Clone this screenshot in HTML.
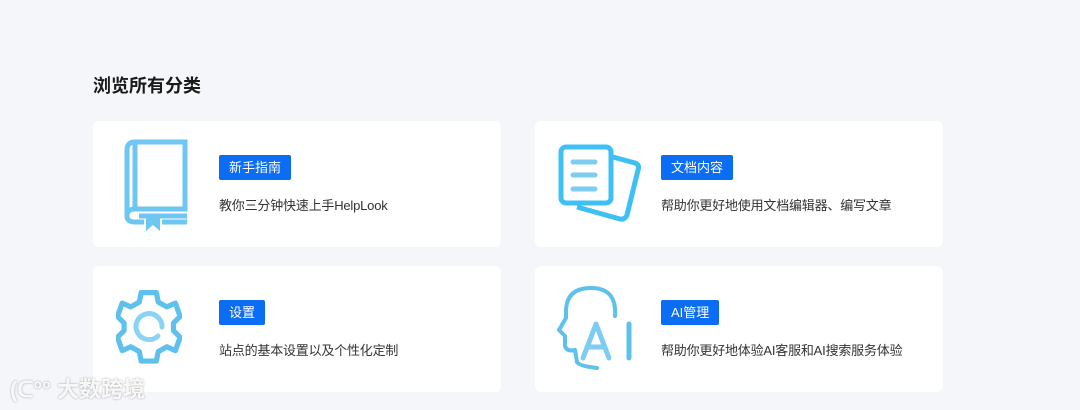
<!DOCTYPE html>
<html><head><meta charset="utf-8"><style>
*{margin:0;padding:0;box-sizing:border-box}
body{width:1080px;height:410px;background:#f4f6fa;font-family:"Liberation Sans","Noto Sans CJK SC",sans-serif;position:relative;overflow:hidden}
h2{position:absolute;left:93px;top:72px;font-size:18px;font-weight:bold;color:#1a1a1a}
.card{position:absolute;width:408px;height:126px;background:#fff;border-radius:6px}
.tag{position:absolute;left:126px;top:34px;height:25px;padding:0 10px;background:#0b6cf4;color:#fff;font-size:13px;line-height:25px;border-radius:2px}
.desc{position:absolute;left:126px;top:74px;font-size:13px;color:#333;letter-spacing:-0.2px}
svg{position:absolute}
.wm{position:absolute;left:10px;top:372px;font-size:22px;color:rgba(255,255,255,.9);text-shadow:0 0 2px rgba(0,0,0,.35);font-weight:bold}
</style></head><body>
<h2>浏览所有分类</h2>
<div class="card" style="left:93px;top:121px">
<svg style="left:30px;top:18px" width="68" height="92" viewBox="0 0 68 92"><g fill="none" stroke="#6ec6f2" stroke-width="5"><path d="M12 3H62V70H12Q4 70 4 77V11Q4 3 12 3Z"/><path d="M12 3V70"/><path d="M4 77Q4 83 12 83H21"/><path d="M39 83H64"/><path d="M16 77H64"/></g><path d="M23 75H37V92L30 86L23 92Z" fill="#6ec6f2"/></svg>
<div class="tag">新手指南</div><div class="desc">教你三分钟快速上手HelpLook</div></div>
<div class="card" style="left:535px;top:121px">
<svg style="left:22px;top:22px" width="86" height="82" viewBox="0 0 86 82"><g fill="none" stroke="#3ec0f5" stroke-width="5" stroke-linejoin="round"><rect x="4" y="4" width="50" height="56" rx="5"/><path d="M56 14L78 20Q83 22 81 27L70 72Q68 77 63 76L20 64"/></g><g stroke="#7ccdf1" stroke-width="5" stroke-linecap="round"><path d="M16 19H38M16 32H38M16 46H38"/></g></svg>
<div class="tag">文档内容</div><div class="desc">帮助你更好地使用文档编辑器、编写文章</div></div>
<div class="card" style="left:93px;top:266px">
<svg style="left:23px;top:20px" width="66" height="82" viewBox="0 0 66 82"><path d="M25 5H41L43 15L52 20L61 16L66 30L59 37V45L66 52L61 66L52 62L43 67L41 77H25L23 67L14 62L5 66L0 52L7 45V37L0 30L5 16L14 20L23 15Z" fill="none" stroke="#5ec0ec" stroke-width="5.5" stroke-linejoin="round" transform="scale(.95) translate(1.5,2)"/><path d="M42 50A13 13 0 1 1 46 41" fill="none" stroke="#8bd3f5" stroke-width="5" stroke-linecap="round"/></svg>
<div class="tag">设置</div><div class="desc">站点的基本设置以及个性化定制</div></div>
<div class="card" style="left:535px;top:266px">
<svg style="left:22px;top:18px" width="80" height="90" viewBox="0 0 80 90"><path d="M58 32Q60 4 34 4Q10 4 9 26L9 34L2 46L8 52L8 62Q10 68 18 66L20 78Q22 82 40 84" fill="none" stroke="#5ec0ec" stroke-width="4" stroke-linecap="round" stroke-linejoin="round"/><path d="M26 74L39 40L52 74M30 63H48" fill="none" stroke="#7ccdf1" stroke-width="5" stroke-linecap="round" stroke-linejoin="round"/><path d="M72 40V74" stroke="#5ec0ec" stroke-width="5" stroke-linecap="round"/></svg>
<div class="tag">AI管理</div><div class="desc">帮助你更好地体验AI客服和AI搜索服务体验</div></div>
<div class="wm">(ᑕ°° 大数跨境</div>
</body></html>
